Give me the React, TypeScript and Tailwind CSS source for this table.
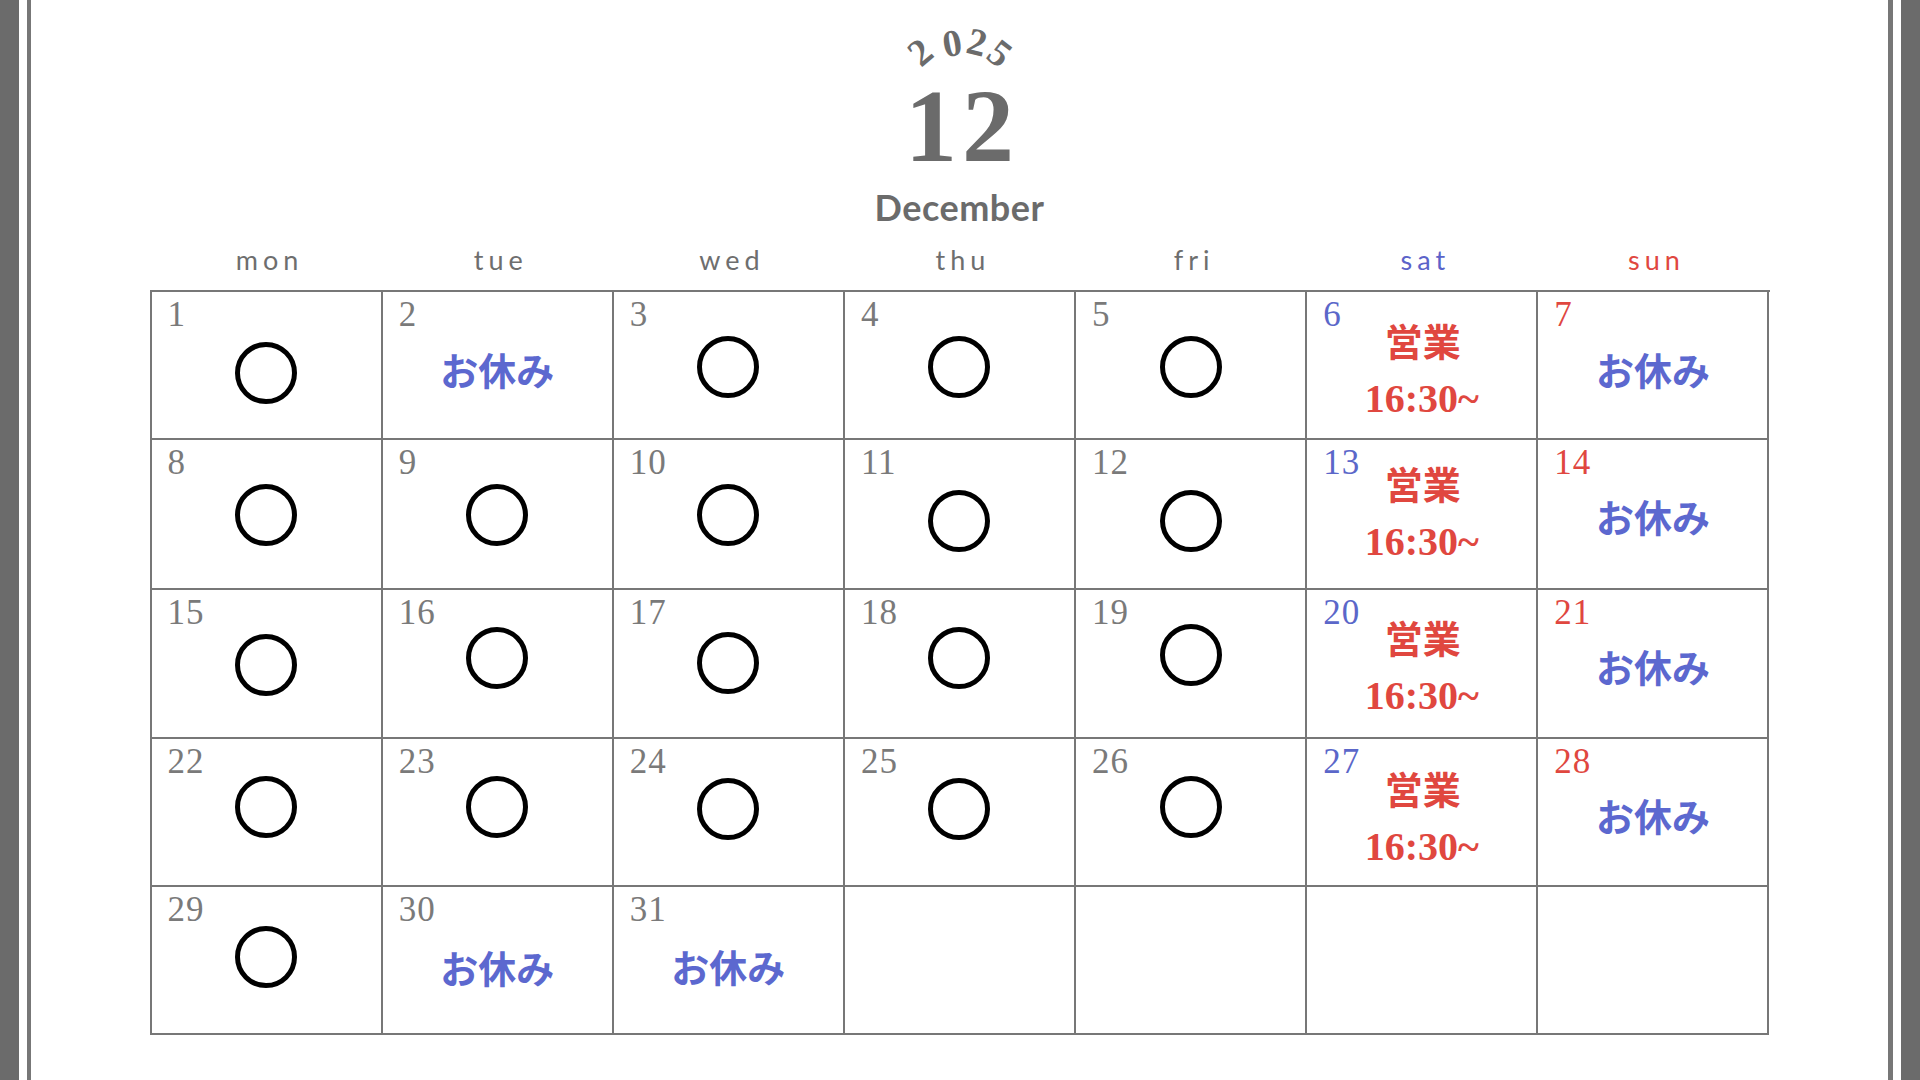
import React from "react";

type Kind = "o" | "off" | "open";
type Cell = { d?: number; t?: Kind; pt?: string };

const rows: Cell[][] = [
  [
    { d: 1, t: "o", pt: "pt-[50px]" },
    { d: 2, t: "off", pt: "pt-[58px]" },
    { d: 3, t: "o", pt: "pt-[44px]" },
    { d: 4, t: "o", pt: "pt-[44px]" },
    { d: 5, t: "o", pt: "pt-[44px]" },
    { d: 6, t: "open", pt: "pt-[29px]" },
    { d: 7, t: "off", pt: "pt-[58px]" },
  ],
  [
    { d: 8, t: "o", pt: "pt-[44px]" },
    { d: 9, t: "o", pt: "pt-[44px]" },
    { d: 10, t: "o", pt: "pt-[44px]" },
    { d: 11, t: "o", pt: "pt-[50px]" },
    { d: 12, t: "o", pt: "pt-[50px]" },
    { d: 13, t: "open", pt: "pt-[24px]" },
    { d: 14, t: "off", pt: "pt-[57px]" },
  ],
  [
    { d: 15, t: "o", pt: "pt-[44px]" },
    { d: 16, t: "o", pt: "pt-[37px]" },
    { d: 17, t: "o", pt: "pt-[42px]" },
    { d: 18, t: "o", pt: "pt-[37px]" },
    { d: 19, t: "o", pt: "pt-[34px]" },
    { d: 20, t: "open", pt: "pt-[28px]" },
    { d: 21, t: "off", pt: "pt-[57px]" },
  ],
  [
    { d: 22, t: "o", pt: "pt-[37px]" },
    { d: 23, t: "o", pt: "pt-[37px]" },
    { d: 24, t: "o", pt: "pt-[39px]" },
    { d: 25, t: "o", pt: "pt-[39px]" },
    { d: 26, t: "o", pt: "pt-[37px]" },
    { d: 27, t: "open", pt: "pt-[30px]" },
    { d: 28, t: "off", pt: "pt-[57px]" },
  ],
  [
    { d: 29, t: "o", pt: "pt-[39px]" },
    { d: 30, t: "off", pt: "pt-[61px]" },
    { d: 31, t: "off", pt: "pt-[60px]" },
    {},
    {},
    {},
    {},
  ],
];

const days = [
  { n: "mon", c: "text-[#6e6e6e]" },
  { n: "tue", c: "text-[#6e6e6e]" },
  { n: "wed", c: "text-[#6e6e6e]" },
  { n: "thu", c: "text-[#6e6e6e]" },
  { n: "fri", c: "text-[#6e6e6e]" },
  { n: "sat", c: "text-[#5b63c9]" },
  { n: "sun", c: "text-[#e0473f]" },
];

function Circle() {
  return (
    <svg width="62" height="62" viewBox="0 0 62 62">
      <circle cx="31" cy="31" r="28.5" fill="none" stroke="#000" strokeWidth="5" />
    </svg>
  );
}

function numColor(col: number) {
  if (col === 5) return "text-[#5b67c9]";
  if (col === 6) return "text-[#e0473f]";
  return "text-[#7a7a7a]";
}

function DayCell({ cell, col }: { cell: Cell; col: number }) {
  return (
    <div className="relative border-r-2 border-b-2 border-[#777]">
      {cell.d !== undefined && (
        <span
          className={`absolute left-[16px] top-[5px] text-[35px] leading-none tracking-[1px] font-['Liberation_Serif',serif] ${numColor(col)}`}
        >
          {cell.d}
        </span>
      )}
      {cell.t && (
        <div className={`flex flex-col items-center ${cell.pt ?? ""}`}>
          {cell.t === "o" && <Circle />}
          {cell.t === "off" && (
            <span className="text-[38px] leading-none font-bold text-[#5c68cf] font-['Noto_Sans_CJK_JP',sans-serif]">
              お休み
            </span>
          )}
          {cell.t === "open" && (
            <>
              <span className="text-[38px] leading-none font-bold text-[#e0473f] font-['Noto_Sans_CJK_JP',sans-serif] pl-[2px]">
                営業
              </span>
              <span className="mt-[20px] text-[40px] leading-none font-bold text-[#e0473f] font-['Liberation_Serif',serif]">
                16:30~
              </span>
            </>
          )}
        </div>
      )}
    </div>
  );
}

export default function App() {
  return (
    <div className="flex h-[1080px] w-full overflow-hidden bg-white">
      <div className="w-[19px] shrink-0 bg-[#6b6b6b]" />
      <div className="w-[8px] shrink-0 bg-white" />
      <div className="w-[4px] shrink-0 bg-[#777]" />
      <main className="flex flex-1 flex-col items-center bg-white">
        <svg width="160" height="56" viewBox="0 0 160 56" className="mt-[20px] block">
          <g fill="#6b6b6b" fontFamily="'Liberation Serif', serif" fontWeight="bold" fontSize="38" textAnchor="middle" dominantBaseline="central">
            <text x="40" y="32" transform="rotate(-40 40 32)">2</text>
            <text x="72" y="23" transform="rotate(-10 72 23)">0</text>
            <text x="97" y="22" transform="rotate(14 97 22)">2</text>
            <text x="120" y="33" transform="rotate(38 120 33)">5</text>
          </g>
        </svg>
        <div className="h-[100px] text-[104px] leading-none font-bold tracking-[5px] pl-[5px] text-[#6b6b6b] font-['Liberation_Serif',serif] -mt-[2px]">
          12
        </div>
        <div className="mt-[15px] text-[36px] leading-none font-bold tracking-[0.5px] text-[#6b6b6b] font-['Lato',sans-serif]">
          December
        </div>
        <div className="mt-[21px] grid w-[1620px] grid-cols-7 pl-[2px]">
          {days.map((d) => (
            <div
              key={d.n}
              className={`text-center text-[27px] leading-none tracking-[5px] pl-[5px] font-['Lato',sans-serif] ${d.c}`}
            >
              {d.n}
            </div>
          ))}
        </div>
        <div className="mt-[17px] grid w-[1620px] grid-cols-7 grid-rows-[148px_150px_149px_148px_148px] border-t-2 border-l-2 border-[#777]">
          {rows.map((r, ri) =>
            r.map((c, ci) => <DayCell key={`${ri}-${ci}`} cell={c} col={ci} />)
          )}
        </div>
      </main>
      <div className="w-[5px] shrink-0 bg-[#777]" />
      <div className="w-[8px] shrink-0 bg-white" />
      <div className="w-[19px] shrink-0 bg-[#6b6b6b]" />
    </div>
  );
}
